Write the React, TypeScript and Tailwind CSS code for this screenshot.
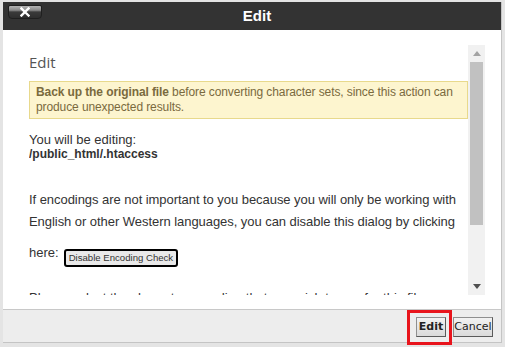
import React from "react";

const sans = { fontFamily: '"Liberation Sans", Arial, sans-serif' };
const ui = { fontFamily: '"DejaVu Sans", Tahoma, sans-serif' };

function CloseButton() {
  return (
    <button className="absolute left-[5px] top-[3px] flex h-[14px] w-[34px] items-center justify-center rounded-b-[4px] rounded-t-[2px] border border-[#1f1f1f] bg-[linear-gradient(#b4b4b4_0%,#8a8a8a_35%,#3a3a3a_50%,#2e2e2e_100%)]">
      <svg width="10" height="10" viewBox="0 0 10 10">
        <path d="M1.5 1.5 L8.5 8.5 M8.5 1.5 L1.5 8.5" stroke="#fff" strokeWidth="2.4" strokeLinecap="square" />
      </svg>
    </button>
  );
}

function Scrollbar() {
  return (
    <div className="flex h-full w-[17px] shrink-0 flex-col items-center bg-[#f1f1f1]">
      <div className="flex h-[17px] w-full items-center justify-center">
        <svg width="8" height="5" viewBox="0 0 8 5">
          <path d="M0 5 L4 0 L8 5 Z" fill="#a3a3a3" />
        </svg>
      </div>
      <div className="h-[163px] w-[13px] bg-[#c1c1c1]" />
      <div className="flex-1" />
      <div className="flex h-[17px] w-full items-center justify-center">
        <svg width="8" height="5" viewBox="0 0 8 5">
          <path d="M0 0 L8 0 L4 5 Z" fill="#505050" />
        </svg>
      </div>
    </div>
  );
}

export default function App() {
  return (
    <div className="relative h-[347px] w-[505px] overflow-hidden bg-[#e4e4e4]">
      <div className="ml-[3px] mt-[2px] flex h-[341px] w-[499px] flex-col border-r border-b border-[#c4c4c4] bg-white">
        <div className="relative flex h-[28px] shrink-0 items-center justify-center bg-[#333333] pl-[10px]">
          <CloseButton />
          <span className="text-[15px] font-bold text-white" style={sans}>
            Edit
          </span>
        </div>

        <div className="flex flex-1 flex-col pl-[26px] pr-[16px] pt-[15px]">
          <div className="flex h-[250px] overflow-hidden">
            <div className="w-[439px] shrink-0 pt-[7px] text-[13px] text-[#333]" style={sans}>
              <h2 className="text-[15px] leading-[20px] text-[#555]" style={{ fontFamily: '"Open Sans", sans-serif' }}>
                Edit
              </h2>
              <div className="mt-[9px] border border-[#e8d98c] bg-[#fdf5cf] px-[6px] py-[3px] text-[12px] leading-[15px] tracking-[-0.1px] text-[#7a6a3e]">
                <b>Back up the original file</b> before converting character sets, since this action can produce unexpected results.
              </div>
              <div className="mt-[13px] leading-[15px]">
                <p>You will be editing:</p>
                <p className="text-[12px] font-bold">/public_html/.htaccess</p>
              </div>
              <p className="mt-[27px] leading-[22px] tracking-[-0.05px]">
                If encodings are not important to you because you will only be working with English or other Western languages, you can disable this dialog by clicking
              </p>
              <div className="mt-[12px] flex items-start gap-[5px]">
                <span className="leading-[15px]">here:</span>
                <button
                  className="mt-[4px] h-[18px] rounded-[3px] border-2 border-black bg-[#e9e9e9] px-[3px] text-[9.6px] leading-[14px] text-[#333]"
                  style={sans}
                >
                  Disable Encoding Check
                </button>
              </div>
              <p className="mt-[23px] leading-[15px]">
                Please select the character encoding that you wish to use for this file:
              </p>
            </div>
            <Scrollbar />
          </div>
        </div>

        <div className="flex h-[33px] shrink-0 items-center justify-end gap-[7px] border-t border-[#c8c8c8] bg-[#ededed] pr-[8px] pt-[2px]">
          <button
            className="h-[20px] w-[30px] border border-[#8f8f8f] border-b-[#5a5a5a] border-r-[#5a5a5a] bg-[linear-gradient(#f2f2f2,#dadada)] text-[11px] font-bold text-[#222]"
            style={ui}
          >
            Edit
          </button>
          <button
            className="h-[20px] w-[40px] border border-[#8f8f8f] border-b-[#5a5a5a] border-r-[#5a5a5a] bg-[linear-gradient(#f2f2f2,#dadada)] text-[11px] text-[#222]"
            style={ui}
          >
            Cancel
          </button>
        </div>
      </div>
      <div className="absolute left-[407px] top-[310px] h-[35px] w-[45px] border-[3px] border-[#e8141c]" />
    </div>
  );
}
